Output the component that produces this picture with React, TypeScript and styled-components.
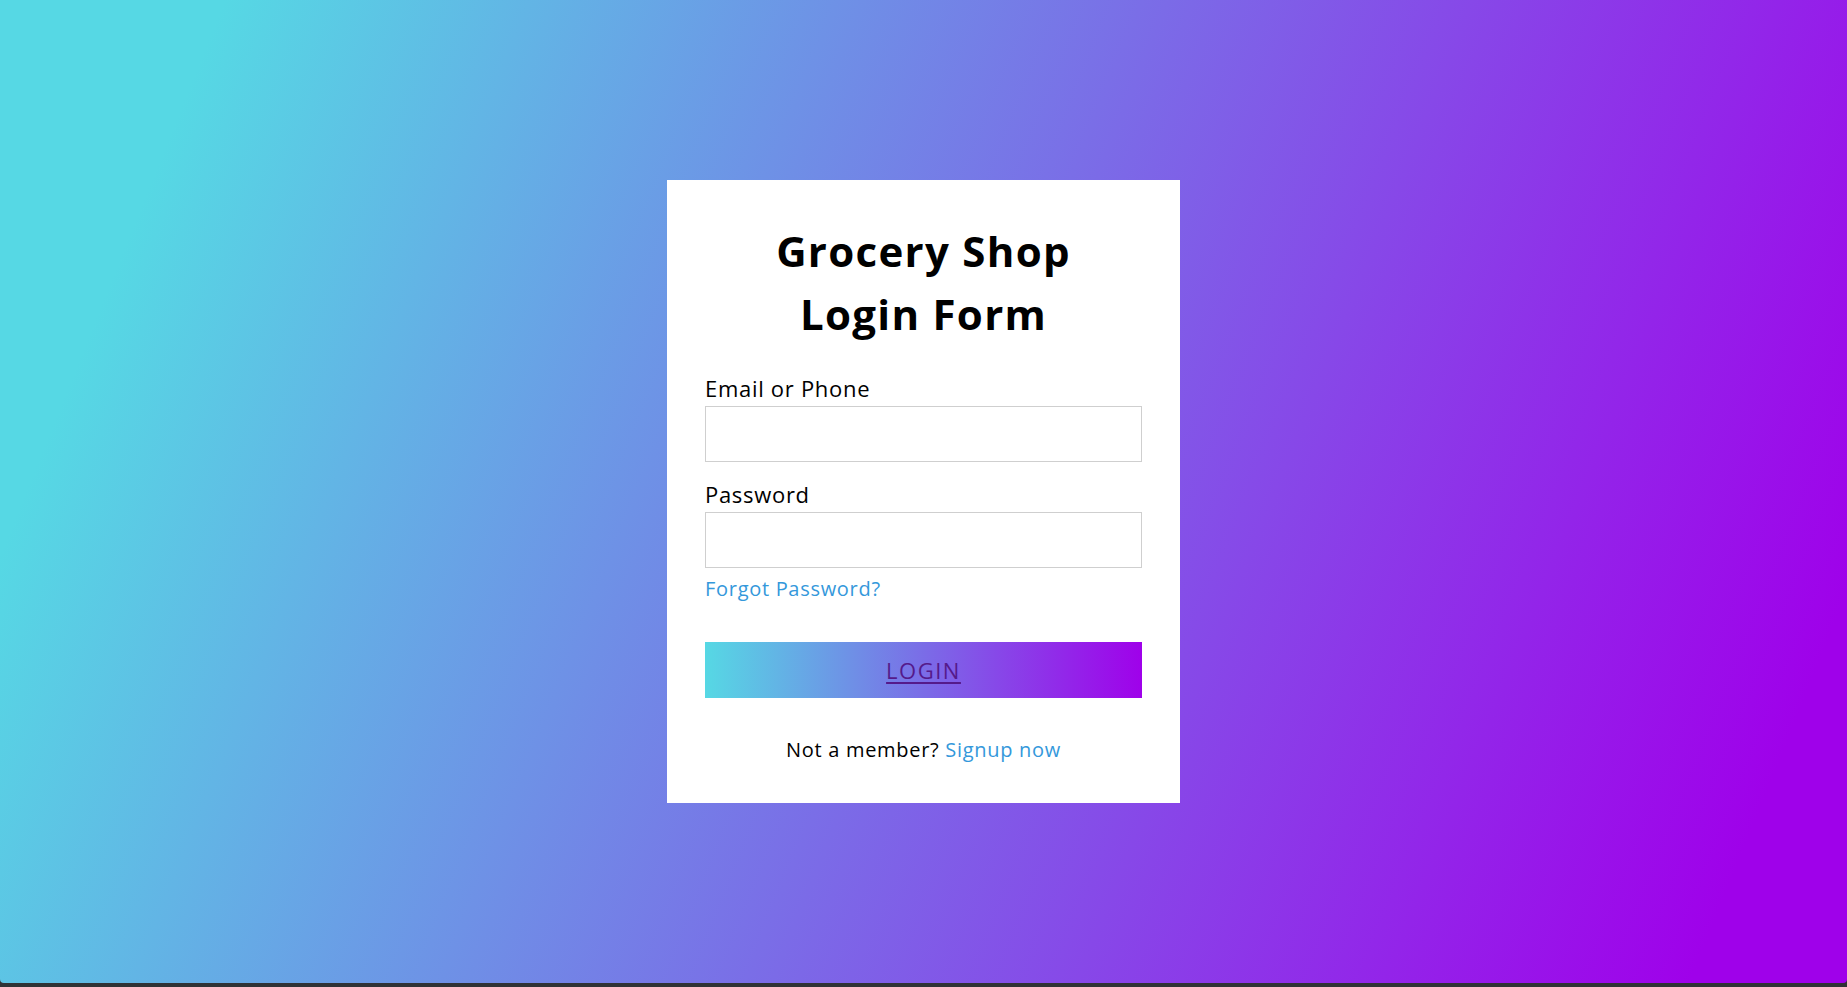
import styled, { createGlobalStyle } from 'styled-components';

const GlobalStyle = createGlobalStyle`
  html, body {
    margin: 0;
    padding: 0;
    background: #303235;
  }
  * {
    box-sizing: border-box;
  }
  body {
    font-family: 'Open Sans', 'Liberation Sans', sans-serif;
  }
`;

export default function App() {
  return (
    <>
      <GlobalStyle />
      <Page>
        <Card>
          <Title>
            Grocery Shop
            <br />
            Login Form
          </Title>
          <Field>
            <Label htmlFor="email">Email or Phone</Label>
            <Input id="email" type="text" />
          </Field>
          <Field $gap={16}>
            <Label htmlFor="password">Password</Label>
            <Input id="password" type="password" />
          </Field>
          <Forgot href="#">Forgot Password?</Forgot>
          <LoginButton>
            <a href="#">LOGIN</a>
          </LoginButton>
          <Signup>
            Not a member? <SignupLink href="#">Signup now</SignupLink>
          </Signup>
        </Card>
      </Page>
    </>
  );
}

const Page = styled.main`
  height: calc(100vh - 4px);
  width: 100%;
  display: flex;
  align-items: center;
  justify-content: center;
  background: linear-gradient(112deg, #56d8e4 10%, #9f01ea 93%);
  border-radius: 0 0 4px 4px;
`;

const Card = styled.div`
  width: 513px;
  background: #fff;
  padding: 39px 38px 38px;
  display: flex;
  flex-direction: column;
`;

const Title = styled.h1`
  margin: 0 0 27px;
  font-size: 42px;
  line-height: 63px;
  font-weight: 700;
  color: #000;
  text-align: center;
  letter-spacing: 1.3px;
`;

const Field = styled.div<{ $gap?: number }>`
  display: flex;
  flex-direction: column;
  gap: 1px;
  margin-top: ${(p) => p.$gap ?? 0}px;
`;

const Label = styled.label`
  font-size: 22px;
  line-height: 33px;
  color: #000;
  letter-spacing: 0.7px;
`;

const Input = styled.input`
  height: 56px;
  width: 100%;
  border: 1px solid #cfcfcf;
  outline: none;
  padding: 0 14px;
  font-size: 18px;
  font-family: inherit;
`;

const Forgot = styled.a`
  margin-top: 6px;
  align-self: flex-start;
  font-size: 20px;
  line-height: 30px;
  color: #3498db;
  text-decoration: none;
  letter-spacing: 0.7px;
`;

const LoginButton = styled.div`
  margin-top: 38px;
  height: 56px;
  display: flex;
  align-items: center;
  justify-content: center;
  background: linear-gradient(to right, #56d8e4, #9f01ea);

  a {
    font-size: 22px;
    color: #551a8b;
    letter-spacing: 1.5px;
    text-decoration: underline;
    text-underline-offset: 3px;
  }
`;

const Signup = styled.div`
  margin-top: 37px;
  text-align: center;
  font-size: 20px;
  line-height: 30px;
  color: #000;
  letter-spacing: 0.7px;
`;

const SignupLink = styled.a`
  color: #3498db;
  text-decoration: none;
`;
